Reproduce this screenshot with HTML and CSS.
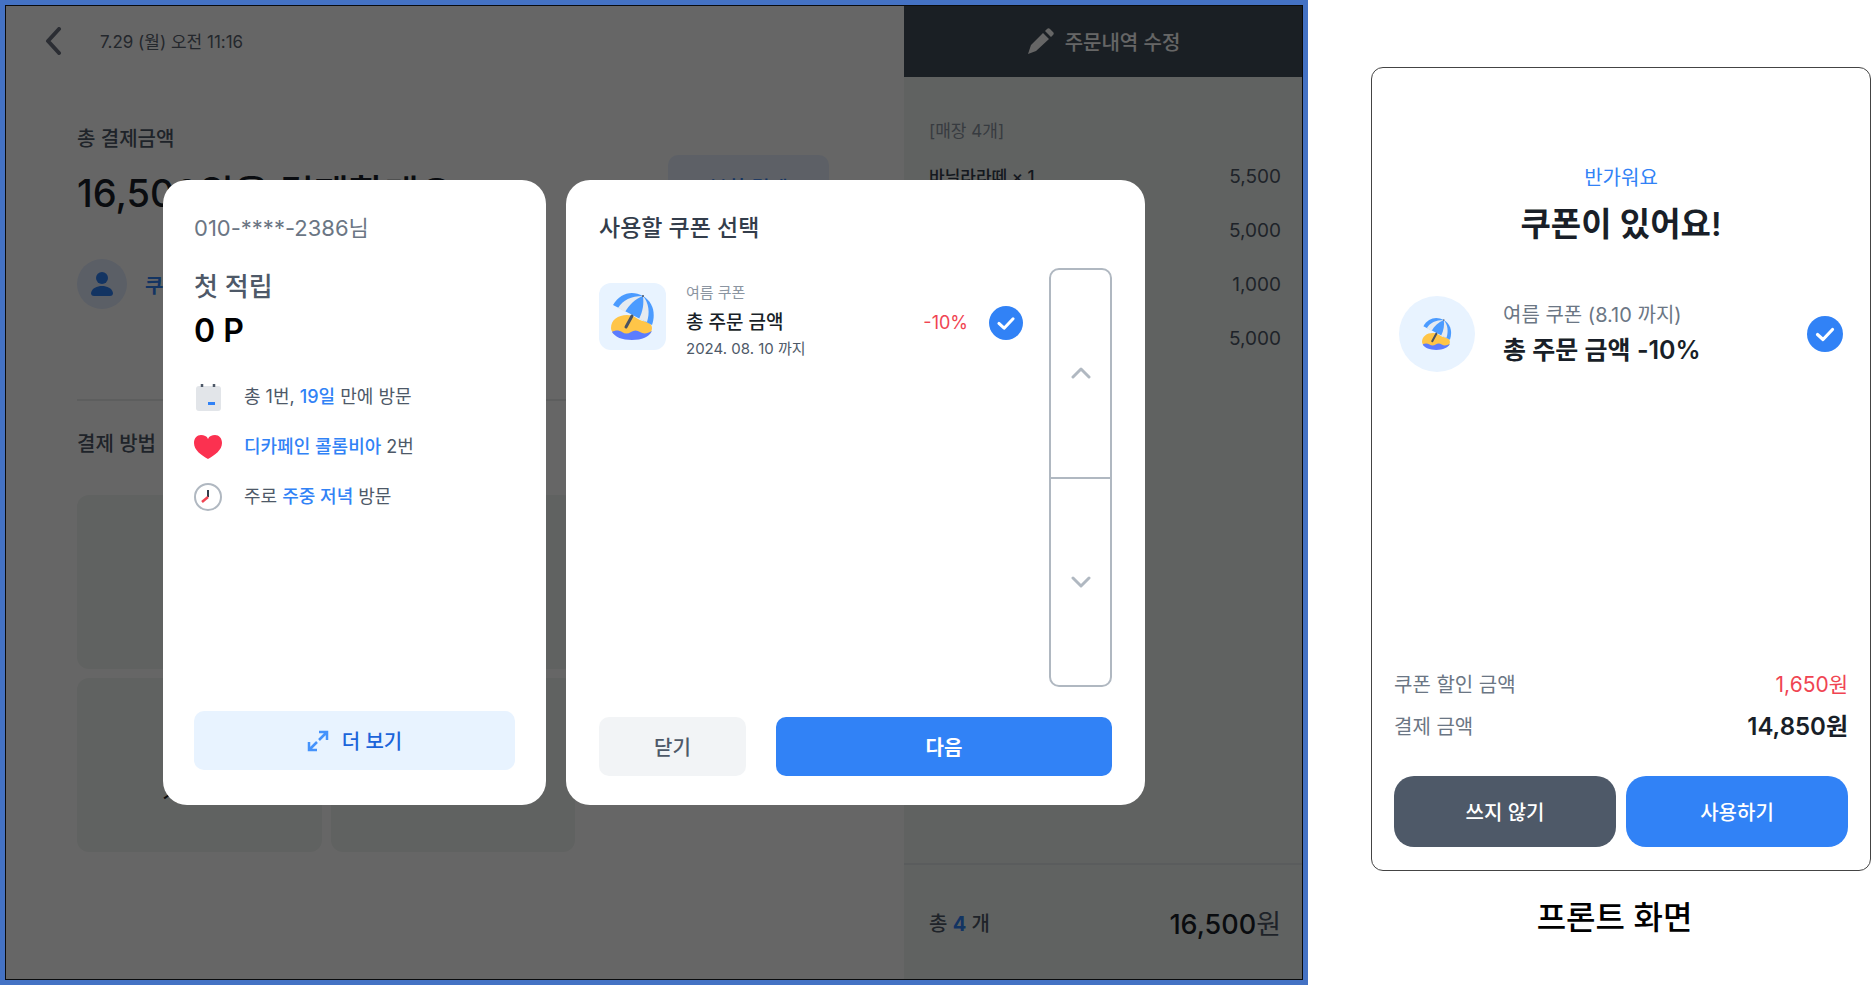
FILE: index.html
```html
<!DOCTYPE html>
<html lang="ko">
<head>
<meta charset="utf-8">
<meta name="viewport" content="width=device-width, initial-scale=1">
<title>쿠폰 선택</title>
<link rel="stylesheet" href="styles.css">
</head>
<body>
<svg class="sprite" aria-hidden="true">
  <symbol id="parasol" viewBox="0 0 44 47">
    <path fill="#ffc548" d="M0 35C0 27 7 22 16 22c6 0 9 3 13 5 5 2 12 2 12 8 0 2-1 4-2 6H3c-2-2-3-4-3-6z"/>
    <path fill="#5b7cff" d="M1 39c3-2 7-2 10 0s6 2 9 0 6-2 9 0 7 2 12-1c-3 6-10 9-20 9S4 44 1 39z"/>
    <path fill="#4b9bff" d="M2 12C9 0 21-3 32 3c10 6 13 17 9 29L2 12z"/>
    <path fill="#e5eaf0" d="M7 15C12 7 20 3 32 3 24 6 18 12 14 19z"/>
    <path fill="#e5eaf0" d="M28 26c4-8 5-15 4-23 6 7 7 17 4 26z"/>
    <path d="M21 23l-6 11" stroke="#4a5260" stroke-width="3" stroke-linecap="round"/>
    <circle cx="32" cy="3" r="1" fill="#4a5260"/>
  </symbol>
  <symbol id="check" viewBox="0 0 36 36">
    <circle cx="18" cy="18" r="18" fill="#3182f6"/>
    <path d="M10.500 18.500l5.500 5 9.500-10" fill="none" stroke="#fff" stroke-width="3.200" stroke-linecap="round" stroke-linejoin="round"/>
  </symbol>
</svg>
<main class="page">
  <section class="kiosk">
    <div class="pay">
      <header class="pay-top">
        <button class="icon-button" type="button" aria-label="뒤로"><svg width="18" height="28" viewBox="0 0 18 28"><path d="M15 2L4 14l11 12" fill="none" stroke="#6b7280" stroke-width="4" stroke-linecap="round" stroke-linejoin="round"/></svg></button>
        <time class="date">7.29 (월) 오전 11:16</time>
      </header>
      <div class="pay-body">
        <p class="pay-label">총 결제금액</p>
        <div class="pay-total">
          <h1 class="pay-amount">16,500원을 결제할게요</h1>
          <button class="split" type="button">분할 결제</button>
        </div>
        <div class="member">
          <svg class="avatar" viewBox="0 0 50 50"><circle cx="25" cy="25" r="25" fill="#e3edff"/><circle cx="25" cy="19" r="6" fill="#3182f6"/><path d="M14 34c1-5 6-7 11-7s10 2 11 7c0 2-1 3-3 3H17c-2 0-3-1-3-3z" fill="#3182f6"/></svg>
          <span>쿠폰</span>
        </div>
        <hr class="rule">
        <h2 class="method-title">결제 방법</h2>
        <div class="methods">
          <button class="method" type="button"></button>
          <button class="method" type="button"></button>
          <button class="method" type="button"></button>
          <button class="method" type="button">기타결제</button>
          <button class="method" type="button"></button>
        </div>
      </div>
    </div>
    <aside class="order">
      <button class="edit" type="button">
        <svg width="27" height="27" viewBox="0 0 27 27"><path fill="#fff" d="M20 1c1-1 2-1 3 0l3 3c1 1 1 2 0 3l-2 2-6-6zM16 5l6 6L9 23 1 26l3-9z"/></svg>
        주문내역 수정
      </button>
      <div class="order-list">
        <p class="order-head">[매장 4개]</p>
        <dl class="order-row"><dt>바닐라라떼 × 1</dt><dd>5,500</dd></dl>
        <dl class="order-row"><dt></dt><dd>5,000</dd></dl>
        <dl class="order-row"><dt></dt><dd>1,000</dd></dl>
        <dl class="order-row"><dt></dt><dd>5,000</dd></dl>
      </div>
      <footer class="order-sum">
        <span>총 <b>4</b> 개</span>
        <span class="order-price"><strong>16,500</strong>원</span>
      </footer>
    </aside>
    <div class="dim">
      <section class="dialog customer">
        <p class="phone">010-****-2386님</p>
        <h2 class="saving">첫 적립</h2>
        <p class="point">0 P</p>
        <ul class="facts">
          <li><svg width="28" height="30" viewBox="0 0 28 30"><rect x="2" y="4" width="25" height="25" rx="3" fill="#e2e5e9"/><path d="M8 2v3M20 2v3" stroke="#4e5968" stroke-width="2.500"/><rect x="14" y="20" width="7" height="3" fill="#3182f6"/></svg><span>총 1번, <em>19일</em> 만에 방문</span></li>
          <li><svg width="28" height="30" viewBox="0 0 28 30"><path fill="#fb3150" d="M14 27C7 23 0 18 0 11 0 6 3 3 7 3c3 0 6 1 7 4 1-3 4-4 7-4 4 0 7 3 7 8 0 7-7 12-14 16z"/></svg><span><em>디카페인 콜롬비아</em> 2번</span></li>
          <li><svg width="28" height="30" viewBox="0 0 28 30"><circle cx="14" cy="15" r="13" fill="#fff" stroke="#b0b8c1" stroke-width="2"/><path d="M14 8v7" stroke="#333d4b" stroke-width="2"/><path d="M14 15l-6 5" stroke="#f04452" stroke-width="2.500"/></svg><span>주로 <em>주중 저녁</em> 방문</span></li>
        </ul>
        <button class="more" type="button">
          <svg width="22" height="22" viewBox="0 0 22 22" fill="none" stroke="#4593fc" stroke-width="2.500"><path d="M12 2h8v8M20 2l-8 8M10 20H2v-8M2 20l8-8"/></svg>
          더 보기
        </button>
      </section>
      <section class="dialog coupons">
        <h2 class="coupons-title">사용할 쿠폰 선택</h2>
        <div class="coupons-body">
          <label class="coupon">
            <span class="thumb"><svg width="44" height="47"><use href="#parasol"/></svg></span>
            <span class="coupon-text">
              <small>여름 쿠폰</small>
              <strong>총 주문 금액</strong>
              <span class="until">2024. 08. 10 까지</span>
            </span>
            <span class="off">-10%</span>
            <input class="tick" type="checkbox" checked>
            <svg class="mark" width="34" height="34"><use href="#check"/></svg>
          </label>
          <div class="scroller">
            <button type="button" aria-label="위로"><svg width="20" height="12" viewBox="0 0 20 12"><path d="M2 10l8-8 8 8"/></svg></button>
            <button type="button" aria-label="아래로"><svg width="20" height="12" viewBox="0 0 20 12"><path d="M2 2l8 8 8-8"/></svg></button>
          </div>
        </div>
        <div class="coupons-actions">
          <button class="close" type="button">닫기</button>
          <button class="next" type="button">다음</button>
        </div>
      </section>
    </div>
  </section>
  <figure class="front">
    <div class="front-card">
      <p class="hello">반가워요</p>
      <h2 class="front-title">쿠폰이 있어요!</h2>
      <label class="front-coupon">
        <span class="round"><svg width="30" height="32"><use href="#parasol"/></svg></span>
        <span class="front-text">
          <small>여름 쿠폰 (8.10 까지)</small>
          <strong>총 주문 금액 -10%</strong>
        </span>
        <input class="tick" type="checkbox" checked>
        <svg class="mark" width="36" height="36"><use href="#check"/></svg>
      </label>
      <dl class="sums">
        <div><dt>쿠폰 할인 금액</dt><dd class="minus">1,650원</dd></div>
        <div><dt>결제 금액</dt><dd class="final">14,850원</dd></div>
      </dl>
      <div class="front-actions">
        <button class="skip" type="button">쓰지 않기</button>
        <button class="use" type="button">사용하기</button>
      </div>
    </div>
    <figcaption class="caption">프론트 화면</figcaption>
  </figure>
</main>
</body>
</html>
```
FILE: styles.css
```css
* { box-sizing: border-box; }
body, h1, h2, p, ul, dl, dd, figure { margin: 0; }
body {
  font-family: Inter, "Noto Sans CJK KR", sans-serif;
  color: #191f28;
  background: #fff;
}
ul { padding: 0; list-style: none; }
em { font-style: normal; }
button { border: 0; padding: 0; background: none; font: inherit; color: inherit; }
svg { display: block; flex: none; }
.sprite { position: absolute; width: 0; height: 0; }
.page { display: flex; gap: 63px; min-height: 100vh; }

/* counter screen */
.kiosk {
  position: relative;
  display: flex;
  flex: 1298 1 0;
  border: 5px solid #4472c4;
  outline: 1px solid #181c22;
  outline-offset: -6px;
  white-space: nowrap;
}
.pay { flex: 899 1 0; min-width: 0; }
.pay-top { display: flex; align-items: center; gap: 38px; height: 71px; padding-left: 39px; }
.date { font-size: 17px; color: #5a6470; }
.pay-body { padding: 48px 75px 0 72px; }
.pay-label { font-size: 20px; line-height: 30px; font-weight: 500; color: #4e5968; }
.pay-total { display: flex; justify-content: space-between; height: 95px; }
.pay-amount { padding-top: 9px; font-size: 38px; line-height: 60px; font-weight: 500; }
.split { width: 161px; height: 64px; margin-top: 1px; border-radius: 10px; background: #e8f1ff; color: #3182f6; font-size: 20px; font-weight: 500; }
.member { display: flex; align-items: center; gap: 18px; height: 70px; color: #3182f6; font-size: 20px; font-weight: 700; }
.avatar { width: 50px; height: 50px; }
.rule { height: 2px; margin: 80px 0 28px; border: 0; background: #e8eaec; }
.method-title { font-size: 20px; line-height: 30px; font-weight: 500; color: #4e5968; }
.methods { display: grid; grid-template-columns: repeat(3, 1fr); grid-auto-rows: 174px; gap: 9px; padding-top: 36px; }
.method { padding-top: 54px; border-radius: 12px; background: #f0f4f2; font-size: 20px; font-weight: 500; }
.order { display: flex; flex: 399 1 0; flex-direction: column; min-width: 0; background: #f0f4f2; }
.edit {
  display: flex; align-items: center; justify-content: center; gap: 11px;
  height: 72px; background: #434f5b; color: #fff; font-size: 20px; font-weight: 500;
}
.order-list { flex: 1; padding: 39px 22px 0 25px; font-size: 17px; }
.order-head { height: 43px; line-height: 30px; color: #8b95a1; }
.order-row { display: flex; justify-content: space-between; height: 54px; line-height: 36px; color: #4e5968; }
.order-row dt { font-weight: 500; color: #333d4b; }
.order-row dd { font-size: 19px; }
.order-sum {
  display: flex; align-items: center; justify-content: space-between;
  height: 117px; padding: 0 22px 0 25px; border-top: 2px solid #e2e5e8; font-size: 20px; font-weight: 500; color: #4e5968;
}
.order-sum b { color: #3182f6; }
.order-price { font-size: 27px; font-weight: 400; }
.order-price strong { font-weight: 500; color: #191f28; }

/* dialogs over the counter screen */
.dim {
  position: absolute; inset: 0;
  display: flex; align-items: center; gap: 20px;
  padding: 0 158px;
  background: rgba(0, 0, 0, .6);
}
.dialog { display: flex; flex-direction: column; height: 625px; border-radius: 24px; background: #fff; }
.customer { flex: 321 1 0; padding: 33px 31px 35px; }
.coupons { flex: 513 1 0; padding: 32px 33px 29px; }
.phone { font-size: 22px; line-height: 30px; color: #6b7684; }
.saving { margin-top: 24px; font-size: 26px; line-height: 40px; font-weight: 500; color: #4e5968; }
.point { font-size: 32px; line-height: 48px; font-weight: 600; color: #000; }
.facts { display: grid; gap: 20px; padding-top: 27px; font-size: 18px; line-height: 30px; color: #4e5968; }
.facts li { display: flex; align-items: center; gap: 22px; }
.facts em { color: #3182f6; font-weight: 500; }
.more {
  display: flex; align-items: center; justify-content: center; gap: 13px;
  height: 59px; margin-top: auto; border-radius: 10px; background: #e8f3ff; color: #1b64da; font-size: 20px; font-weight: 500;
}
.coupons-title { font-size: 23px; line-height: 32px; font-weight: 500; color: #333d4b; }
.coupons-body { display: flex; flex: 1; gap: 26px; padding: 24px 0 30px; }
.coupon { position: relative; display: flex; flex: 1; align-items: flex-start; padding-top: 10px; }
.thumb { display: grid; place-items: center; width: 67px; height: 67px; margin-top: 5px; border-radius: 12px; background: #e8f3ff; }
.coupon-text { display: grid; flex: 1; padding-left: 20px; color: #6b7684; }
.coupon-text small { font-size: 15px; line-height: 30px; color: #8b95a1; }
.coupon-text strong { font-size: 19px; line-height: 30px; font-weight: 500; color: #191f28; }
.until { font-size: 15px; line-height: 22px; color: #4e5968; }
.off { padding-right: 21px; font-size: 18px; line-height: 90px; color: #f04452; }
.coupon .mark { margin-top: 28px; }
.tick { position: absolute; opacity: 0; right: 0; }
.scroller { display: flex; flex-direction: column; width: 63px; border: 2px solid #b0b8c1; border-radius: 10px; }
.scroller button { display: grid; flex: 1; place-items: center; }
.scroller button + button { border-top: 2px solid #b0b8c1; }
.scroller path { fill: none; stroke: #b0b8c1; stroke-width: 3; stroke-linecap: round; stroke-linejoin: round; }
.coupons-actions { display: flex; gap: 30px; height: 59px; font-size: 20px; font-weight: 500; }
.close, .next { border-radius: 10px; }
.close { flex: 147 1 0; background: #f2f4f6; color: #4e5968; }
.next { flex: 336 1 0; background: #3182f6; color: #fff; font-weight: 700; }

/* customer-facing screen */
.front { flex: 500 1 0; padding-top: 67px; white-space: nowrap; }
.front-card {
  display: flex; flex-direction: column; height: 804px;
  padding: 95px 22px 23px; border: 1px solid #444; border-radius: 12px;
}
.hello { font-size: 20px; line-height: 30px; color: #3182f6; text-align: center; }
.front-title { padding-top: 7px; font-size: 33px; line-height: 48px; font-weight: 600; text-align: center; }
.front-coupon { position: relative; display: flex; align-items: center; margin-top: 48px; padding: 0 5px; }
.round { display: grid; place-items: center; width: 76px; height: 76px; border-radius: 50%; background: #e8f3ff; }
.front-text { display: grid; flex: 1; padding: 0 0 3px 28px; }
.front-text small { font-size: 20px; line-height: 34px; color: #6b7684; }
.front-text strong { font-size: 25px; line-height: 36px; font-weight: 600; }
.sums { display: grid; gap: 12px; margin-top: auto; color: #6b7684; font-size: 20px; line-height: 30px; }
.sums div { display: flex; justify-content: space-between; }
.minus { color: #f04452; font-size: 21px; }
.final { color: #191f28; font-size: 24px; font-weight: 600; }
.front-actions { display: flex; gap: 10px; height: 71px; margin-top: 34px; color: #fff; font-size: 20px; font-weight: 500; }
.front-actions button { flex: 1; border-radius: 20px; }
.skip { background: #4e5968; }
.use { background: #3182f6; }
.caption { padding: 24px 13px 0 0; font-size: 32px; line-height: 46px; font-weight: 500; color: #000; text-align: center; }
```
